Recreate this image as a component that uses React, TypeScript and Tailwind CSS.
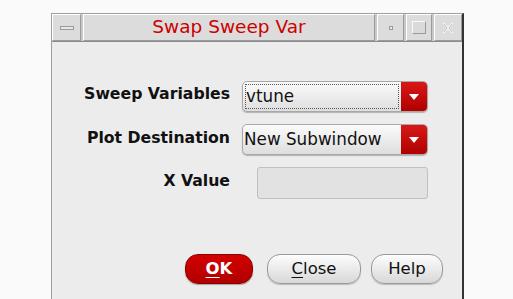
import React from 'react';

const TitleBtn: React.FC<{ className?: string; children?: React.ReactNode }> = ({ className = '', children }) => (
  <div className={`h-full flex items-center justify-center bg-[#dcdcdc] border border-t-white border-l-white border-r-[#9a9a9a] border-b-[#9a9a9a] ${className}`}>
    {children}
  </div>
);

const Dropdown: React.FC<{ value: string; focused?: boolean }> = ({ value, focused }) => (
  <div className="w-[186px] h-[31px] flex rounded-[5px] border border-[#a8a8a8] bg-gradient-to-b from-[#fbfbfb] to-[#dedede] shadow-[0_1px_1px_rgba(0,0,0,0.25)] overflow-hidden">
    <div className={`flex-1 flex items-center text-[16.8px] text-[#111] ${focused ? 'm-[2px] pl-0 border border-dotted border-[#555]' : 'pl-[1px]'}`}>
      {value}
    </div>
    <div className="w-[26px] flex items-center justify-center bg-gradient-to-b from-[#d81818] to-[#b00000]">
      <svg width="10" height="6" viewBox="0 0 10 6">
        <path d="M0 0h10L5 6z" fill="#fff" />
      </svg>
    </div>
  </div>
);

const PillBtn: React.FC<{ className?: string; children?: React.ReactNode }> = ({ className = '', children }) => (
  <div className={`h-[30px] flex items-center justify-center rounded-[13px] border border-[#9a9a9a] bg-gradient-to-b from-[#fdfdfd] to-[#d8d8d8] text-[16.5px] text-[#111] shadow-[0_1px_1px_rgba(0,0,0,0.2)] ${className}`}>
    {children}
  </div>
);

export default function App() {
  return (
    <div className="w-[513px] h-[299px] bg-[#fafafa] pl-[51px] pt-[13px] overflow-hidden" style={{ fontFamily: '"DejaVu Sans", sans-serif' }}>
      <div className="w-[413px] h-[286px] flex flex-col border-l border-t border-[#a0a0a0] border-r-2 border-r-[#333] bg-[#ececec]">
        {/* title bar */}
        <div className="h-[28px] flex gap-[2px] bg-[#c8c8c8] border-b border-[#8c8c8c]">
          <TitleBtn className="w-[29px]">
            <div className="w-[14px] h-[4px] border border-[#9a9a9a] bg-[#e8e8e8]" />
          </TitleBtn>
          <TitleBtn className="flex-1">
            <span className="text-[18.5px] text-[#cc0000] leading-none">Swap Sweep Var</span>
          </TitleBtn>
          <TitleBtn className="w-[27px]">
            <div className="w-[4px] h-[4px] border border-[#9a9a9a] bg-[#e8e8e8]" />
          </TitleBtn>
          <TitleBtn className="w-[26px]">
            <div className="w-[14px] h-[13px] border border-[#fafafa] border-r-[#9a9a9a] border-b-[#9a9a9a] bg-[#dadada]" />
          </TitleBtn>
          <TitleBtn className="w-[28px]">
            <svg width="14" height="14" viewBox="0 0 14 14">
              <path d="M2 2l4 5-4 5M12 2l-4 5 4 5M2 2l5 4 5-4M2 12l5-4 5 4" fill="none" stroke="#f4f4f4" strokeWidth="1.5" />
              <path d="M3 3l3 4-3 4M11 3l-3 4 3 4" fill="none" stroke="#bcbcbc" strokeWidth="1" />
            </svg>
          </TitleBtn>
        </div>

        {/* form */}
        <div className="flex-1 flex flex-col">
          <div className="grid grid-cols-[178px_auto] gap-x-[12px] gap-y-[12px] mt-[39px] items-center">
            <div className="text-right font-bold text-[15.7px] text-[#111] -mt-[5px]">Sweep Variables</div>
            <Dropdown value="vtune" focused />
            <div className="text-right font-bold text-[15.7px] text-[#111] -mt-[3px]">Plot Destination</div>
            <Dropdown value="New Subwindow" />
            <div className="text-right font-bold text-[15.7px] text-[#111] -mt-[5px]">X Value</div>
            <div className="ml-[15px] w-[171px] h-[32px] rounded-[3px] border border-[#c0c0c0] bg-[#e2e2e2]" />
          </div>

          <div className="flex ml-[133px] mt-[55px]">
            <div className="w-[68px] h-[30px] flex items-center justify-center rounded-[13px] bg-gradient-to-b from-[#d40000] to-[#b00000] border border-[#8a0000] text-white font-bold text-[16.5px] shadow-[0_1px_1px_rgba(0,0,0,0.3)]">
              <span className="underline underline-offset-[3px]">O</span>K
            </div>
            <PillBtn className="w-[94px] ml-[14px]">
              <span className="underline underline-offset-[3px]">C</span>lose
            </PillBtn>
            <PillBtn className="w-[72px] ml-[10px]">Help</PillBtn>
          </div>
        </div>
      </div>
    </div>
  );
}
